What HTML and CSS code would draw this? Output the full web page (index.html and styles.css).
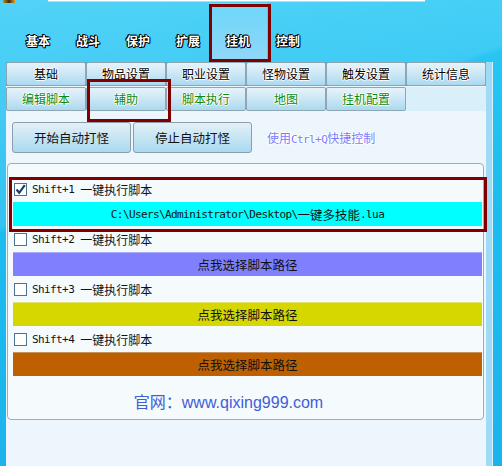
FILE: index.html
```html
<!DOCTYPE html>
<html lang="zh">
<head>
<meta charset="utf-8">
<title>挂机 - 辅助</title>
<link rel="stylesheet" href="styles.css">
</head>
<body>
<div class="window">
  <div class="topstrip">
    <span class="appicon"></span>
    <span class="titlefield"></span>
  </div>
  <nav class="topnav">
    <span class="nav-item">基本</span>
    <span class="nav-item">战斗</span>
    <span class="nav-item">保护</span>
    <span class="nav-item">扩展</span>
    <span class="nav-item active">挂机</span>
    <span class="nav-item">控制</span>
  </nav>
  <div class="panel">
    <div class="main">
      <div class="tabrow row1">
        <span class="tab">基础</span>
        <span class="tab">物品设置</span>
        <span class="tab">职业设置</span>
        <span class="tab">怪物设置</span>
        <span class="tab">触发设置</span>
        <span class="tab">统计信息</span>
      </div>
      <div class="tabrow row2">
        <span class="tab">编辑脚本</span>
        <span class="tab">辅助</span>
        <span class="tab">脚本执行</span>
        <span class="tab">地图</span>
        <span class="tab">挂机配置</span>
      </div>
      <div class="content">
        <div class="btnrow">
          <button class="btn">开始自动打怪</button>
          <button class="btn">停止自动打怪</button>
          <span class="hint">使用<span class="mono">Ctrl+Q</span>快捷控制</span>
        </div>
        <div class="group">
          <div class="item">
            <div class="label"><span class="check checked"><svg viewBox="0 0 13 13" width="13" height="13"><path d="M2.5 6.5 L5.2 9.8 L10.8 2.2" fill="none" stroke="#1b3a6b" stroke-width="2.2"/></svg></span><span class="mono">Shift+1</span><span class="cjk">一键执行脚本</span></div>
            <div class="bar cyan"><span class="mono">C:\Users\Administrator\Desktop\</span>一键多技能<span class="mono">.lua</span></div>
          </div>
          <div class="item">
            <div class="label"><span class="check"></span><span class="mono">Shift+2</span><span class="cjk">一键执行脚本</span></div>
            <div class="bar purple">点我选择脚本路径</div>
          </div>
          <div class="item">
            <div class="label"><span class="check"></span><span class="mono">Shift+3</span><span class="cjk">一键执行脚本</span></div>
            <div class="bar yellow">点我选择脚本路径</div>
          </div>
          <div class="item">
            <div class="label"><span class="check"></span><span class="mono">Shift+4</span><span class="cjk">一键执行脚本</span></div>
            <div class="bar orange">点我选择脚本路径</div>
          </div>
          <div class="site">官网：<span class="url">www.qixing999.com</span></div>
        </div>
      </div>
    </div>
    <div class="strip"></div>
    <div class="stripline"></div>
  </div>
  <div class="mark mark-nav"></div>
  <div class="mark mark-tab"></div>
  <div class="mark mark-item"></div>
</div>
</body>
</html>
```
FILE: styles.css
```css
* { box-sizing: border-box; }
html, body { margin: 0; padding: 0; }
body {
  width: 502px;
  height: 466px;
  overflow: hidden;
  font-family: "Noto Sans CJK SC", "Liberation Sans", sans-serif;
}
.window {
  position: relative;
  width: 502px;
  height: 466px;
  background:
    linear-gradient(160deg, rgba(255,255,255,0.18) 0%, rgba(255,255,255,0.10) 35%, rgba(255,255,255,0) 36%),
    linear-gradient(180deg, #2cc9f5 0%, #1dbdf0 40%, #1cb3ec 100%);
  display: flex;
  flex-direction: column;
}
.topstrip {
  height: 3px;
  display: flex;
  align-items: flex-start;
}
.appicon {
  width: 12px;
  height: 3px;
  margin-left: 3px;
  background: linear-gradient(90deg, #d08a10, #3a2a10 50%, #e0a020);
}
.titlefield {
  width: 377px;
  height: 2px;
  margin-left: 33px;
  background: #ffffff;
  border-bottom: 1px solid #b9dceb;
}
.topnav {
  height: 59px;
  display: flex;
  padding-left: 13px;
}
.nav-item {
  width: 50px;
  padding-top: 31px;
  text-align: center;
  font-size: 12px;
  font-weight: bold;
  line-height: 14px;
  color: #ffffff;
  text-shadow: -1px 0 #000, 1px 0 #000, 0 -1px #000, 0 1px #000, 1px 1px #000, -1px -1px #000;
}
.nav-item.active {
  width: 58px;
  margin: 0 -4px;
  background: linear-gradient(180deg, rgba(130,220,252,0.6), rgba(150,215,248,0.95));
}
.panel {
  flex: 1;
  display: flex;
  padding-left: 6px;
}
.main {
  width: 480px;
  background: #eef6fd;
  display: flex;
  flex-direction: column;
}
.strip {
  width: 6px;
  background: #9fdbf6;
}
.stripline {
  width: 1px;
  background: #d9f1fb;
}
.tabrow {
  display: grid;
  grid-template-columns: repeat(6, 80px);
  height: 24px;
}
.row1 { background: #1dbdf0; }
.row2 {
  margin-top: 1px;
  background: #d9eff9;
}
.tab {
  display: flex;
  align-items: center;
  justify-content: center;
  border: 1px solid #8ea6b4;
  border-radius: 2px;
  background: linear-gradient(180deg, #e6f3fa 0%, #cbe7f5 50%, #aad9f0 100%);
  font-size: 12px;
  line-height: 14px;
}
.row1 .tab {
  color: #000;
  text-shadow: -1px 0 #fff, 1px 0 #fff, 0 -1px #fff, 0 1px #fff;
}
.row2 .tab {
  color: #0b8a0b;
  text-shadow: -1px 0 #fff, 1px 0 #fff, 0 -1px #fff, 0 1px #fff;
}
.content {
  flex: 1;
  padding: 11px 0 0 6px;
}
.btnrow {
  display: flex;
  align-items: center;
  gap: 2px;
  height: 31px;
}
.btn {
  width: 119px;
  height: 31px;
  margin: 0;
  padding: 0;
  border: 1px solid #8d9ea9;
  border-radius: 3px;
  background: linear-gradient(180deg, #e3f0f7 0%, #c7e5f4 50%, #a8daf1 100%);
  font-family: "Noto Sans CJK SC", sans-serif;
  font-size: 12.5px;
  color: #111;
}
.hint {
  margin-left: 13px;
  font-size: 12px;
  color: #7c7cff;
  text-shadow: -1px 0 #fff, 1px 0 #fff, 0 -1px #fff, 0 1px #fff;
}
.mono {
  font-family: "DejaVu Sans Mono", "Liberation Mono", monospace;
  font-size: 11px;
  letter-spacing: -0.6px;
}
.group {
  width: 477px;
  height: 257px;
  margin-top: 10px;
  margin-left: -5px;
  padding: 19px 1px 0 5px;
  border: 1px solid #a4abb1;
  border-radius: 4px;
  background: #f5fafd;
  display: flex;
  flex-direction: column;
  gap: 7px;
}
.item {
  display: flex;
  flex-direction: column;
}
.label {
  height: 19px;
  display: flex;
  align-items: flex-start;
  font-size: 12px;
  line-height: 14px;
  color: #111;
}
.label .mono { margin-left: 5px; }
.label .cjk { margin-left: 6px; }
.check {
  width: 13px;
  height: 13px;
  margin-left: 1px;
  border: 1px solid #4d7393;
  background: #ffffff;
  display: flex;
}
.check svg { margin: -1px; }
.bar {
  height: 24px;
  display: flex;
  align-items: center;
  justify-content: center;
  font-size: 12.5px;
  color: #111;
}
.cyan { background: #00ffff; height: 24px; }
.purple { background: #8080ff; border-top: 1px solid #a8a8ff; }
.yellow { background: #d6d600; border-top: 1px solid #e4e470; }
.orange { background: #bf6000; border-top: 1px solid #c8905a; }
.site {
  margin-top: 8px;
  padding-right: 38px;
  text-align: center;
  font-size: 16px;
  line-height: 20px;
  color: #3f5ed6;
}
.url {
  font-family: "Liberation Sans", sans-serif;
  font-size: 16px;
}
.mark {
  position: absolute;
  border: 3px solid #800000;
}
.mark-nav { left: 209px; top: 4px; width: 62px; height: 58px; }
.mark-tab { left: 87px; top: 79px; width: 84px; height: 43px; }
.mark-item { left: 9px; top: 177px; width: 478px; height: 55px; }
```
